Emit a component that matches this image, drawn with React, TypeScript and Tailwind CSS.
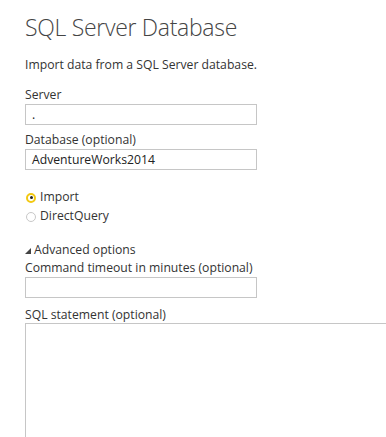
const font = { fontFamily: '"Open Sans", "Noto Sans", sans-serif' };

function Field({ label, value, gap }: { label: string; value?: string; gap: string }) {
  return (
    <div className="flex flex-col">
      <label className="text-[12.2px] leading-[18px] text-[#333]">{label}</label>
      <div className={`${gap} h-[21px] w-[232px] border border-[#c6c6c6] bg-white px-[6px] text-[12.2px] leading-[19px] text-[#222]`}>
        {value}
      </div>
    </div>
  );
}

function Radio({ label, checked }: { label: string; checked?: boolean }) {
  return (
    <div className="flex h-[19px] items-center gap-[4px] pl-[1px]">
      <span
        className={
          checked
            ? "flex h-[10px] w-[10px] items-center justify-center rounded-full border-[2px] border-[#f2c811] bg-white"
            : "flex h-[10px] w-[10px] items-center justify-center rounded-full border border-[#c8c8c8] bg-white"
        }
      >
        {checked && <span className="h-[3px] w-[3px] rounded-full bg-[#222]" />}
      </span>
      <span className="text-[12.2px] text-[#333]">{label}</span>
    </div>
  );
}

export default function App() {
  return (
    <div className="h-[437px] w-[386px] overflow-hidden bg-white pl-[25px]" style={font}>
      <h1 className="pt-[12px] text-[23px] font-light leading-[30px] tracking-[-0.3px] text-[#444]">
        SQL Server Database
      </h1>
      <p className="mt-[14px] text-[12.2px] leading-[18px] text-[#333]">Import data from a SQL Server database.</p>

      <div className="mt-[12px] flex flex-col gap-[6px]">
        <Field label="Server" value="." gap="mt-0" />
        <Field label="Database (optional)" value="AdventureWorks2014" gap="mt-0" />
      </div>

      <div className="mt-[18px] flex flex-col">
        <Radio label="Import" checked />
        <Radio label="DirectQuery" />
      </div>

      <div className="mt-[15px] flex h-[18px] items-center gap-[3px] text-[12.2px] text-[#333]">
        <svg width="6" height="6" viewBox="0 0 6 6" className="mt-[2px]">
          <polygon points="6,0 6,6 0,6" fill="#444" />
        </svg>
        Advanced options
      </div>

      <Field label="Command timeout in minutes (optional)" gap="mt-0" />

      <div className="mt-[9px] flex flex-col">
        <label className="text-[12.2px] leading-[16px] text-[#333]">SQL statement (optional)</label>
        <div className="h-[200px] w-[400px] border border-[#c6c6c6] bg-white" />
      </div>
    </div>
  );
}
